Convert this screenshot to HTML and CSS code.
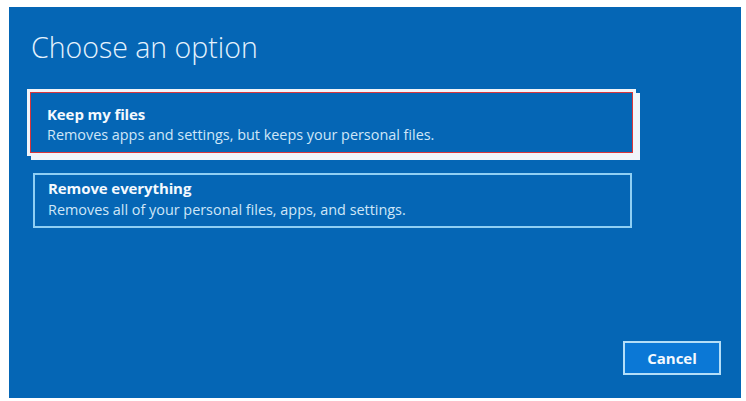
FILE: index.html
```html
<!DOCTYPE html>
<html lang="en">
<head>
<meta charset="utf-8">
<title>Choose an option</title>
<link rel="stylesheet" href="styles.css">
</head>
<body>
<div class="panel">
  <h1 class="title">Choose an option</h1>
  <div class="options">
    <div class="option option-selected">
      <div class="option-name">Keep my files</div>
      <div class="option-desc">Removes apps and settings, but keeps your personal files.</div>
    </div>
    <div class="option option-plain">
      <div class="option-name">Remove everything</div>
      <div class="option-desc">Removes all of your personal files, apps, and settings.</div>
    </div>
  </div>
  <div class="footer">
    <button class="cancel" type="button">Cancel</button>
  </div>
</div>
</body>
</html>
```
FILE: styles.css
```css
html, body {
  margin: 0;
  padding: 0;
  background: #ffffff;
}

body {
  font-family: "Open Sans", "Noto Sans", sans-serif;
}

.panel {
  box-sizing: border-box;
  width: 732px;
  height: 391px;
  margin: 7px 0 0 9px;
  padding: 22px 20px 23px 22px;
  background: #0566b5;
  display: flex;
  flex-direction: column;
}

.title {
  margin: 0;
  font-weight: 300;
  font-size: 28.5px;
  line-height: 36px;
  color: #e4f2fd;
}

.options {
  margin-top: 27px;
  display: flex;
  flex-direction: column;
  align-items: flex-start;
  gap: 20px;
}

.option {
  box-sizing: border-box;
  color: #ffffff;
}

.option-selected {
  margin-left: -1px;
  width: 603px;
  height: 61px;
  padding: 11px 14px 0 16px;
  border: 1px solid #d8363c;
  box-shadow: 0 0 0 3px #f1f5fa, 4px 4px 0 3px #f1f5fa;
}

.option-plain {
  margin-left: 2px;
  width: 599px;
  height: 55px;
  padding: 3px 12px 0 13px;
  border: 2px solid #8fcff4;
}

.option-name {
  font-weight: 700;
  font-size: 15px;
  line-height: 20px;
  letter-spacing: -0.1px;
  color: #f4f9fe;
}

.option-desc {
  margin-top: 1px;
  font-size: 14.4px;
  line-height: 20px;
  color: #cfe6f8;
}

.option-plain .option-desc {
  margin-top: 2px;
}

.footer {
  margin-top: auto;
  display: flex;
  justify-content: flex-end;
}

.cancel {
  box-sizing: border-box;
  width: 98px;
  height: 34px;
  padding: 0;
  border: 2px solid #b4def8;
  background: #0b78d6;
  color: #f4f9fe;
  font-family: "Open Sans", "Noto Sans", sans-serif;
  font-weight: 700;
  font-size: 15px;
}
```
